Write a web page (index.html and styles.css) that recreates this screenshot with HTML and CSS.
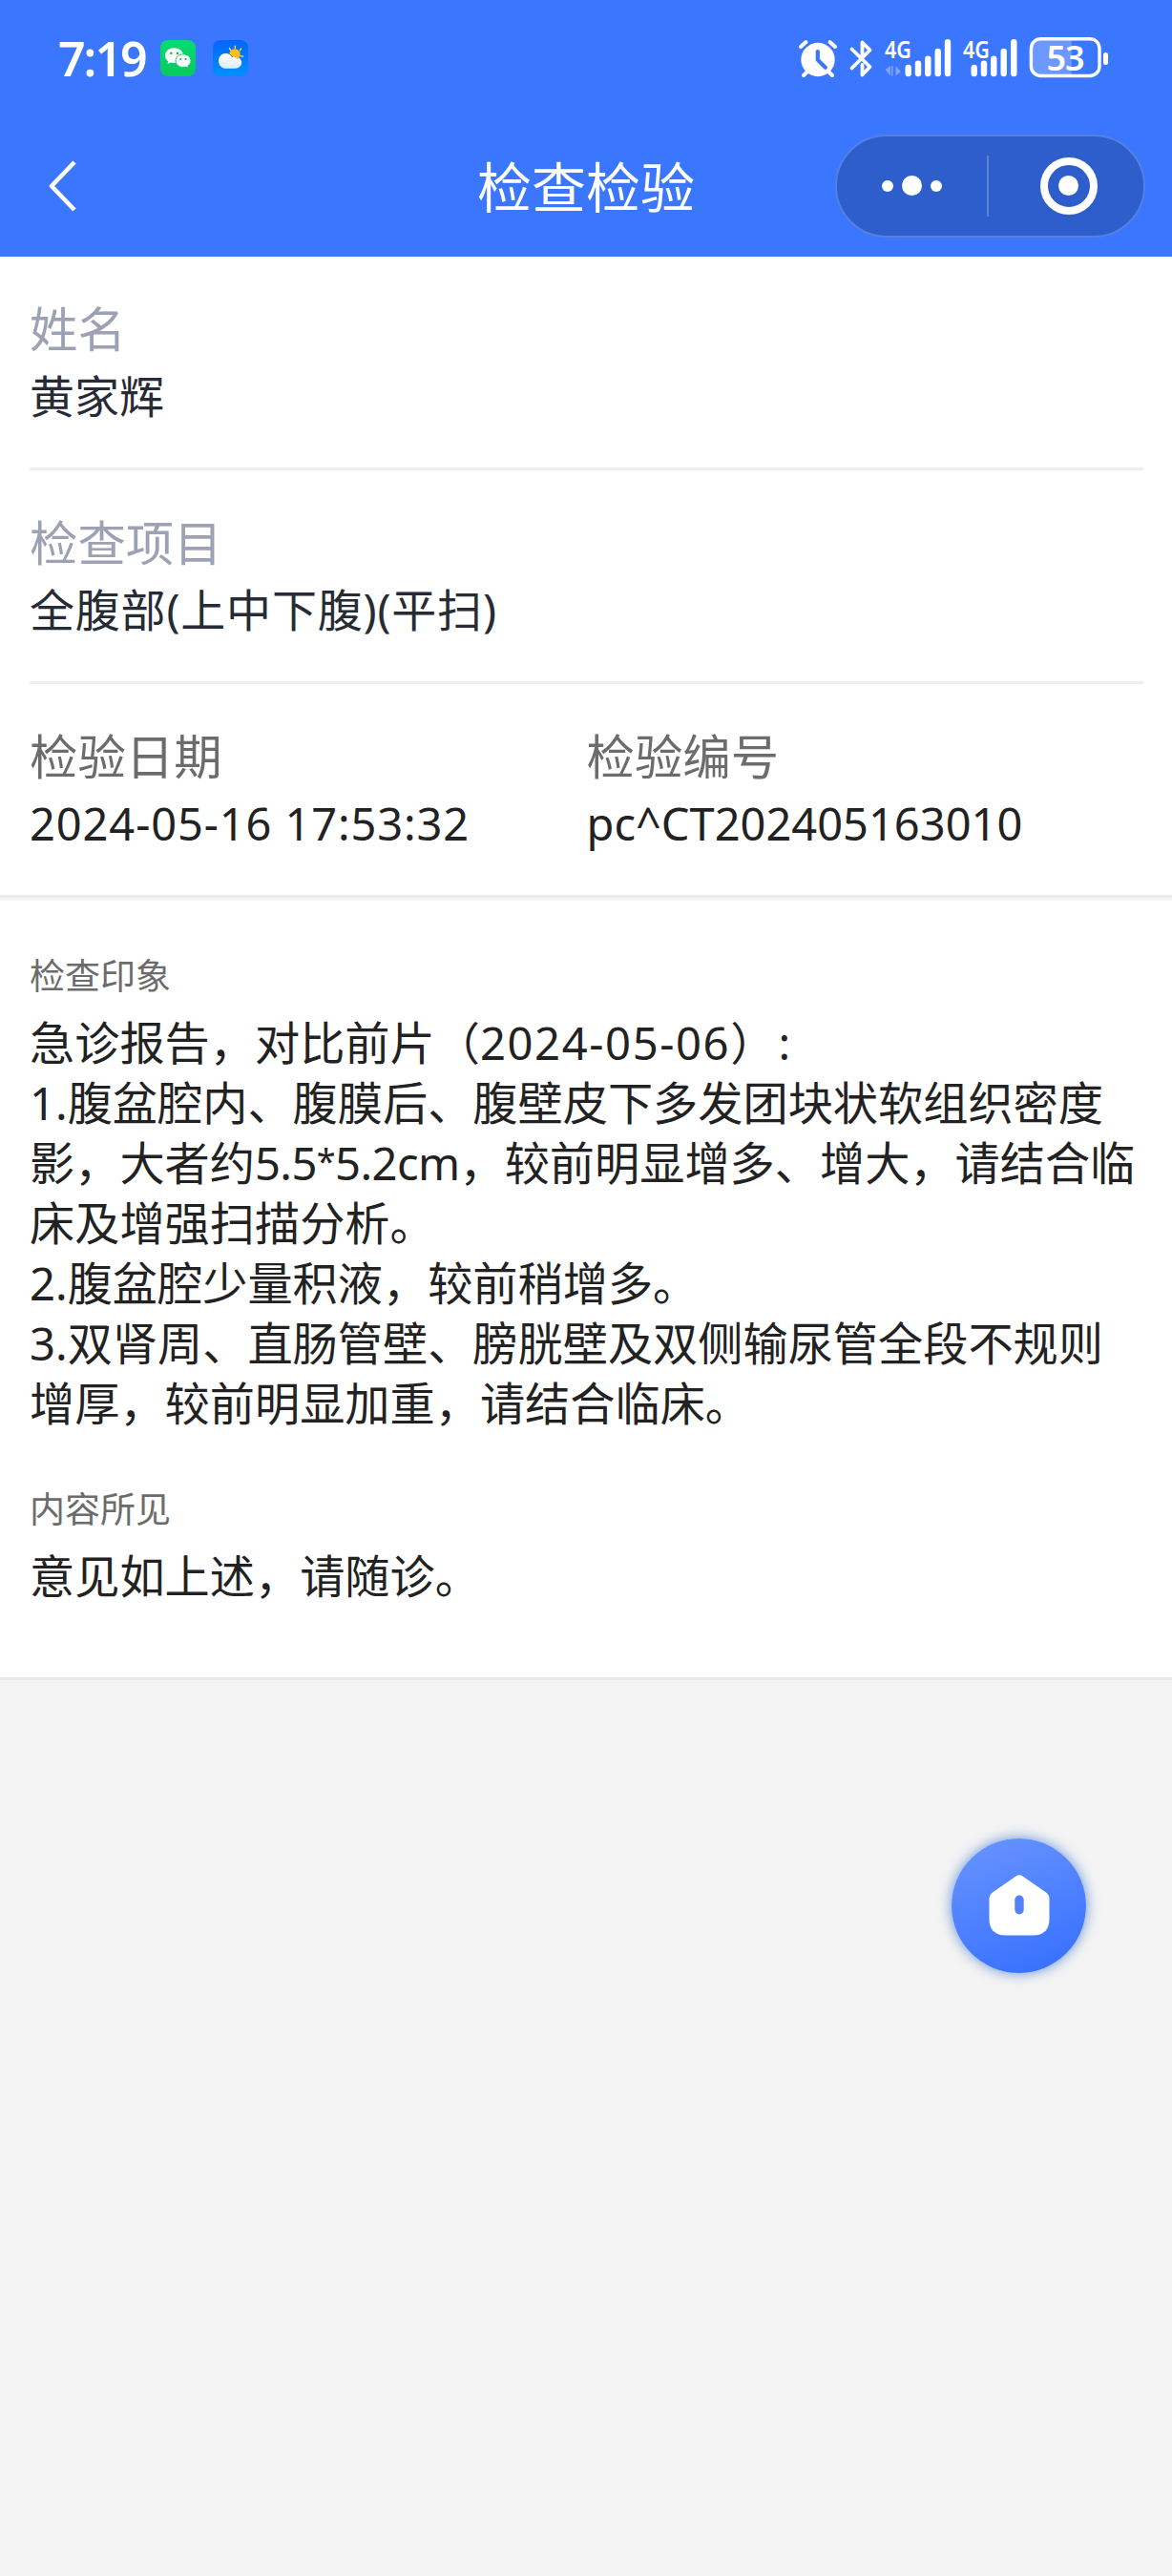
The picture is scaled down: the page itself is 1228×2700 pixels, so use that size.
FILE: index.html
```html
<!DOCTYPE html>
<html lang="zh-CN">
<head>
  <meta charset="UTF-8" />
  <meta name="viewport" content="width=device-width, initial-scale=1.0" />
  <title>检查检验</title>
  <link rel="stylesheet" href="styles.css">
</head>
<body>
  <header class="header">
    <div class="status-bar">
      <div class="status-left">
        <span class="time">7:19</span>
        <svg class="app-icon" viewBox="0 0 37 38">
          <defs>
            <linearGradient id="wechat" x1="0" y1="0" x2="0" y2="1">
              <stop offset="0" stop-color="#07dc72" />
              <stop offset="1" stop-color="#07c95f" />
            </linearGradient>
          </defs>
          <rect width="37" height="38" rx="8" fill="url(#wechat)" />
          <path d="M14.5 8.3c-5.3 0-9.5 3.4-9.5 7.9 0 2.500 1.300 4.700 3.400 6.100l-.9 2.700 3.300-1.500c1.200.3 2.400.5 3.700.5 5.300 0 9.500-3.500 9.500-7.800s-4.200-7.900-9.500-7.900z" fill="#fff" />
          <circle cx="11.300" cy="13.800" r="1.300" fill="#07b95a" />
          <circle cx="18" cy="13.800" r="1.300" fill="#07b95a" />
          <path d="M24 14.800c-4.500 0-8 3-8 6.900s3.500 6.800 8 6.800c1.100 0 2.100-.2 3-.5l2.700 1.300-.7-2.400c1.800-1.200 3-3.100 3-5.200 0-3.900-3.500-6.900-8-6.900z" fill="#fff" stroke="#07d068" stroke-width="1" />
          <circle cx="21.300" cy="20" r="1.100" fill="#07b95a" />
          <circle cx="26.600" cy="20" r="1.100" fill="#07b95a" />
        </svg>
        <svg class="app-icon" viewBox="0 0 37 38">
          <defs>
            <linearGradient id="sky" x1="0" y1="0" x2="0" y2="1">
              <stop offset="0" stop-color="#0565fb" />
              <stop offset="1" stop-color="#0090ff" />
            </linearGradient>
            <linearGradient id="cloud" x1="0" y1="0" x2="0" y2="1">
              <stop offset="0" stop-color="#fff" />
              <stop offset="1" stop-color="#dceeff" />
            </linearGradient>
          </defs>
          <rect width="37" height="38" rx="8" fill="url(#sky)" />
          <path d="M17.500 8.500l.8 2M23.300 6.200v2M29.700 9l-1.300 1.700M29.300 16.800l2.400.3" stroke="#ffd45c" stroke-width="1.400" stroke-linecap="round" />
          <path d="M13.500 14c3.100 0 5.600 1.600 6.800 4.300 1-.6 2-.8 3-.8 3.900 0 6.900 2.700 6.900 6.100s-2.900 6.100-6.700 6.100H14c-4.600 0-8-3.400-8-7.800s3.200-7.900 7.500-7.900z" fill="url(#cloud)" />
          <path d="M17.300 14.500a5.700 5.700 0 1 1 8.500 5.400c-1.500-1.500-3.200-2-4.800-1.800-.8-1.600-2-2.800-3.700-3.600z" fill="#ffbe1e" />
        </svg>
      </div>
      <div class="status-right">
        <svg class="indicators" width="318" height="44" viewBox="836 39 318 44">
          <!-- alarm -->
          <circle cx="857" cy="62.500" r="17.700" fill="#fff" />
          <path d="M839 49l5.500-5M875 49l-5.500-5M847 74l-5 5M867 74l5 5" stroke="#fff" stroke-width="4" stroke-linecap="round" />
          <path d="M856.800 54v8.700l8 8" fill="none" stroke="#3b76ff" stroke-width="4.200" stroke-linecap="round" stroke-linejoin="round" />
          <!-- bluetooth -->
          <path d="M892.500 51.500l19 18.500-8 8.500V68M903.500 57V44.500l8 8-19 19" fill="none" stroke="#fff" stroke-width="3.800" stroke-linecap="round" stroke-linejoin="round" />
          <!-- sim 1 -->
          <text class="net" x="927" y="60.500" textLength="28" lengthAdjust="spacingAndGlyphs">4G</text>
          <path d="M927.500 73l5.500-4v10.500zM944 75l-5.500 4.500V69z" fill="#7ea3ff" />
          <path d="M934 69h1.500v10.500H934z" fill="#7ea3ff" />
          <path d="M951.700 71v6M962 66.700V77M972.300 61.700V77M982.700 54v23M993 44.300V77" stroke="#fff" stroke-width="6.400" stroke-linecap="round" />
          <!-- sim 2 -->
          <text class="net" x="1009" y="60.500" textLength="28" lengthAdjust="spacingAndGlyphs">4G</text>
          <path d="M1020.700 71v6M1031 66.700V77M1041.300 61.700V77M1051.700 54v23M1062.300 44.300V77" stroke="#fff" stroke-width="6.400" stroke-linecap="round" />
          <!-- battery -->
          <path d="M1122.700 41h-32a10 10 0 0 0-10 10v18.500a10 10 0 0 0 10 10h32z" fill="#6c98ff" />
          <rect x="1080.400" y="40.700" width="71.600" height="38.800" rx="10" fill="none" stroke="#fff" stroke-width="3.400" />
          <text class="level" x="1116" y="74" text-anchor="middle">53</text>
        </svg>
        <span class="battery-cap"></span>
      </div>
    </div>
    <div class="nav-bar">
      <svg class="back" width="32" height="56" viewBox="0 0 32 56">
        <path d="M27 3L3 28l24 25" fill="none" stroke="#fff" stroke-width="4.600" stroke-linejoin="round" />
      </svg>
      <h1>检查检验</h1>
      <div class="capsule">
        <div class="capsule-half">
          <span class="dot"></span>
          <span class="dot big"></span>
          <span class="dot"></span>
        </div>
        <span class="divider"></span>
        <div class="capsule-half close">
          <span class="ring"><span class="dot big"></span></span>
        </div>
      </div>
    </div>
  </header>

  <section class="info">
    <div class="row">
      <div class="label">姓名</div>
      <div class="value">黄家辉</div>
    </div>
    <div class="row">
      <div class="label">检查项目</div>
      <div class="value item">全腹部(上中下腹)(平扫)</div>
    </div>
    <div class="row two-col">
      <div>
        <div class="label">检验日期</div>
        <div class="value"><span class="date">2024-05-16 17:53:32</span></div>
      </div>
      <div>
        <div class="label">检验编号</div>
        <div class="value">pc^CT202405163010</div>
      </div>
    </div>
  </section>

  <section class="report">
    <h2>检查印象</h2>
    <div class="text">
      <p>急诊报告，对比前片（<span class="day">2024-05-06</span>）<span class="colon">:</span></p>
      <p>1.腹盆腔内、腹膜后、腹壁皮下多发团块状软组织密度影，大者约<span class="size">5.5<span class="star">*</span>5.2cm</span>，较前明显增多、增大，请结合临床及增强扫描分析。</p>
      <p>2.腹盆腔少量积液，较前稍增多。</p>
      <p>3.双肾周、直肠管壁、膀胱壁及双侧输尿管全段不规则增厚，较前明显加重，请结合临床。</p>
    </div>
    <h2>内容所见</h2>
    <div class="text">
      <p>意见如上述，请随诊。</p>
    </div>
  </section>

  <a class="home-button" href="#">
    <svg width="64" height="66" viewBox="0 0 64 66">
      <path d="M28.500 1.500q3.500-2.500 7 0L60 18.500q3.500 2.500 3.500 7V46q0 17.500-17.500 17.500H18Q.5 63.500.5 46V25.500q0-4.500 3.500-7z" fill="#fff" />
      <rect x="27.300" y="21.500" width="9.400" height="20" rx="4.700" fill="#5182fb" />
    </svg>
  </a>
</body>
</html>
```
FILE: styles.css
```css
* {
  box-sizing: border-box;
}
body {
  margin: 0;
  min-height: 2700px;
  position: relative;
  background-color: #f4f4f4;
  color: #222;
  font-family: "Noto Sans", "Noto Sans CJK SC", sans-serif;
  text-spacing-trim: space-all;
}
.header {
  height: 269px;
  background-color: #3b76ff;
  color: white;
}
.status-bar {
  height: 122px;
  padding: 0 67px 0 61px;
  display: flex;
  justify-content: space-between;
  align-items: center;
}
.status-left,
.status-right {
  display: flex;
  align-items: center;
}
.time {
  width: 107px;
  font-size: 50px;
  font-weight: 600;
  line-height: 60px;
  letter-spacing: -2px;
}
.app-icon {
  width: 37px;
  height: 38px;
  margin-right: 18px;
}
.indicators {
  overflow: visible;
}
.net {
  font-size: 26px;
  font-weight: 600;
  fill: white;
}
.level {
  font-size: 36px;
  font-weight: 600;
  letter-spacing: -1px;
  fill: white;
}
.battery-cap {
  width: 5px;
  height: 13px;
  margin-left: 2px;
  border-radius: 3px;
  background-color: white;
}
.nav-bar {
  height: 147px;
  padding: 0 28px 0 51px;
  display: grid;
  grid-template-columns: 325px 1fr 325px;
  align-items: center;
}
.back,
.capsule {
  margin-bottom: 2px;
}
h1 {
  margin: 0;
  padding-right: 23px;
  text-align: center;
  font-size: 57px;
  font-weight: 400;
  line-height: 80px;
}
.capsule {
  width: 325px;
  height: 108px;
  display: flex;
  align-items: center;
  border: 2px solid #5580e2;
  border-radius: 54px;
  background-color: #2d5ecc;
}
.capsule-half {
  flex: 1;
  display: flex;
  justify-content: center;
  align-items: center;
  gap: 9px;
}
.capsule-half.close {
  padding-left: 6px;
}
.divider {
  width: 2px;
  height: 64px;
  background-color: #5c83db;
}
.dot {
  width: 12px;
  height: 12px;
  border-radius: 50%;
  background-color: white;
}
.dot.big {
  width: 21px;
  height: 21px;
}
.ring {
  width: 60px;
  height: 60px;
  display: flex;
  align-items: center;
  justify-content: center;
  border: 8px solid white;
  border-radius: 50%;
}
.info {
  background-color: white;
  border-bottom: 3px solid #ececec;
}
.row {
  height: 224px;
  margin: 0 30px 0 31px;
  padding-top: 41px;
  border-bottom: 3px solid #eee;
}
.label {
  font-size: 50.4px;
  line-height: 70px;
  color: #9ca2b3;
}
.value {
  font-size: 47px;
  line-height: 70px;
  color: #272b35;
}
.item {
  letter-spacing: 0.8px;
}
.two-col {
  height: 221px;
  display: grid;
  grid-template-columns: 1fr 1fr;
  border-bottom: none;
}
.two-col .label {
  color: #6c6c6c;
}
.two-col .value {
  color: #222;
}
.date {
  letter-spacing: 0.9px;
}
.report {
  height: 817px;
  margin-top: 3px;
  padding: 54px 31px 0;
  background-color: white;
  border-bottom: 3px solid #eaeaea;
}
h2 {
  margin: 0 0 14px;
  font-size: 37px;
  font-weight: 400;
  line-height: 50px;
  color: #6c6c6c;
}
.text {
  margin-bottom: 54px;
  font-size: 47.2px;
  line-height: 63px;
}
.text p {
  margin: 0;
}
.day {
  letter-spacing: 1.6px;
}
.colon {
  margin-left: 3px;
}
.size {
  letter-spacing: -0.6px;
}
.star {
  font-size: 36px;
  line-height: 1;
  vertical-align: 7px;
}
.home-button {
  position: absolute;
  left: 997px;
  top: 1927px;
  width: 141px;
  height: 141px;
  display: flex;
  align-items: center;
  justify-content: center;
  border-radius: 50%;
  background: linear-gradient(160deg, #6793ff 5%, #3871ff 92%);
  box-shadow: 0 0 14px rgba(50, 110, 200, 0.75);
}
```
